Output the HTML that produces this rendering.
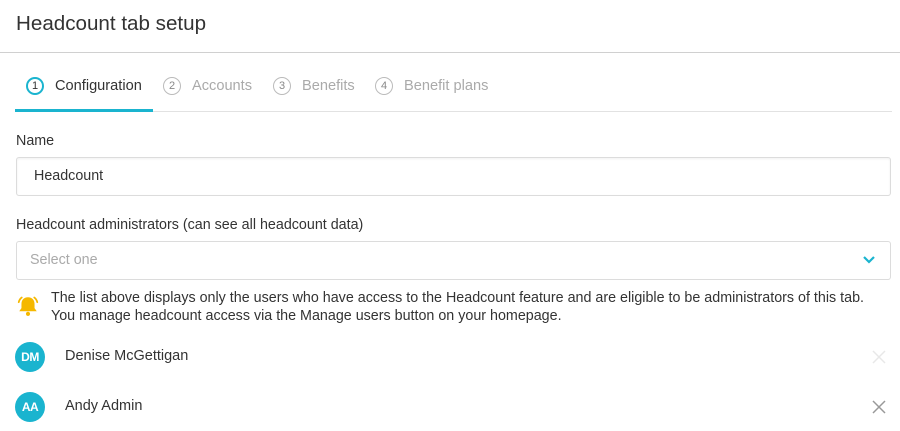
<!DOCTYPE html>
<html><head><meta charset="utf-8"><style>
body{margin:0;width:900px;height:431px;background:#fff;font-family:"Liberation Sans",sans-serif;color:#333;position:relative;overflow:hidden}
.a{position:absolute}
.title{left:16px;top:12px;font-size:20.6px;color:#333}
.hr{left:0;top:52px;width:900px;height:1px;background:#d0d0d0}
.tab{position:absolute;top:77px;display:flex;align-items:center;color:#aaa;font-size:14.6px}
.num{width:16px;height:16px;border:1px solid #bbb;border-radius:50%;font-size:11px;display:flex;align-items:center;justify-content:center;margin-right:11px;color:#888}
.tab.on{color:#333}.tab.on .num{border:2px solid #1ab4cf;width:14px;height:14px;color:#333}
.tline{left:152px;top:111px;width:740px;height:1px;background:#e2e2e2}
.uline{left:15px;top:109px;width:138px;height:3px;background:#1ab4cf}
.lbl{font-size:14.3px;color:#333}
.box{left:16px;width:873px;border:1px solid #dcdcdc;border-radius:3px;font-size:14.3px}
.av{left:15px;width:30px;height:30px;border-radius:50%;background:#1ab4cf;color:#fff;font-size:12px;font-weight:bold;display:flex;align-items:center;justify-content:center;letter-spacing:-0.5px}
.nm{left:65px;font-size:14.5px;color:#333}
</style></head><body>
<div class="a title">Headcount tab setup</div>
<div class="a hr"></div>
<div class="tab on" style="left:26px"><span class="num">1</span>Configuration</div>
<div class="tab" style="left:163px"><span class="num">2</span>Accounts</div>
<div class="tab" style="left:273px"><span class="num">3</span>Benefits</div>
<div class="tab" style="left:375px"><span class="num">4</span>Benefit plans</div>
<div class="a tline"></div><div class="a uline"></div>
<div class="a lbl" style="left:16px;top:133px">Name</div>
<div class="a box" style="top:157px;height:37px;box-shadow:inset 0 1px 2px rgba(0,0,0,.06)"><span class="a" style="left:17px;top:10px">Headcount</span></div>
<div class="a lbl" style="left:16px;top:217px">Headcount administrators (can see all headcount data)</div>
<div class="a box" style="top:241px;height:37px"><span class="a" style="left:13px;top:10px;color:#aaa">Select one</span>
<svg class="a" style="right:14px;top:13px" width="14" height="10" viewBox="0 0 14 10"><path d="M2 2l5 5 5-5" stroke="#1ab4cf" stroke-width="2.2" fill="none"/></svg></div>
<svg class="a" style="left:16px;top:294px" width="24" height="24" viewBox="0 0 22 22"><path d="M11 3c-3.8 0-6 2.6-6 6.2v3.8l-2 2.8h16l-2-2.8V9.2C17 5.6 14.8 3 11 3z" fill="#f5b800"/><circle cx="11" cy="18.2" r="1.9" fill="#f5b800"/><path d="M2.5 7.5c.5-2 1.5-3.3 2.8-4.3M19.5 7.5c-.5-2-1.5-3.3-2.8-4.3" stroke="#f5b800" stroke-width="1.6" fill="none" stroke-linecap="round"/></svg>
<div class="a" style="left:51px;top:289px;font-size:14.3px;line-height:18px;color:#333;white-space:nowrap">The list above displays only the users who have access to the Headcount feature and are eligible to be administrators of this tab.<br>You manage headcount access via the Manage users button on your homepage.</div>
<div class="a av" style="top:342px">DM</div><div class="a nm" style="top:348px">Denise McGettigan</div>
<div class="a av" style="top:392px">AA</div><div class="a nm" style="top:398px">Andy Admin</div>
<svg class="a" style="left:872px;top:350px" width="14" height="14"><path d="M1 1l12 12M13 1L1 13" stroke="#e8e8e8" stroke-width="1.5"/></svg>
<svg class="a" style="left:872px;top:400px" width="14" height="14"><path d="M1 1l12 12M13 1L1 13" stroke="#999" stroke-width="1.5"/></svg>
</body></html>
